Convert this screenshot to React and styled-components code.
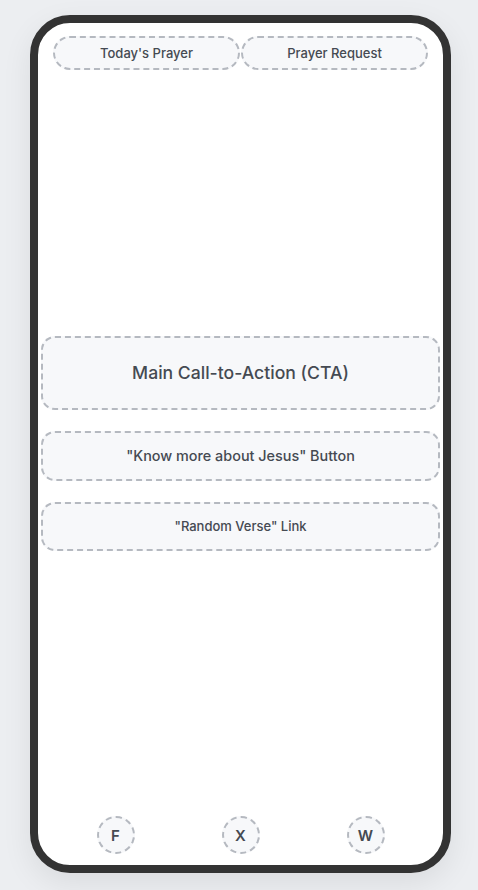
import styled, { createGlobalStyle } from 'styled-components';

const GlobalStyle = createGlobalStyle`
  * {
    box-sizing: border-box;
  }

  body {
    margin: 0;
    background: #eceef1;
    font-family: Inter, "Noto Sans", sans-serif;
  }
`;

function App() {
  return (
    <>
      <GlobalStyle />
      <Page>
        <Phone>
          <TopBar>
            <PillButton>Today's Prayer</PillButton>
            <PillButton>Prayer Request</PillButton>
          </TopBar>
          <Middle>
            <Block $height={74} $size={17.6}>Main Call-to-Action (CTA)</Block>
            <Block $height={50} $size={14.4}>"Know more about Jesus" Button</Block>
            <Block $height={49} $size={13}>"Random Verse" Link</Block>
          </Middle>
          <Footer>
            <Social>F</Social>
            <Social>X</Social>
            <Social>W</Social>
          </Footer>
        </Phone>
      </Page>
    </>
  );
}

const Page = styled.div`
  display: flex;
  padding: 15px 0 17px 30px;
`;

const Phone = styled.div`
  width: 421px;
  height: 858px;
  border: 8px solid #333333;
  border-radius: 40px;
  background: #ffffff;
  box-shadow: 0 10px 30px rgba(0, 0, 0, 0.08);
  display: flex;
  flex-direction: column;
  overflow: hidden;
`;

const TopBar = styled.div`
  display: flex;
  gap: 1px;
  padding: 13px 15px 0;
`;

const dashed = `
  border: 2px dashed #b5b9c0;
  background: #f7f8fa;
  color: #454a52;
  font-weight: 500;
  display: flex;
  align-items: center;
  justify-content: center;
`;

const PillButton = styled.div`
  ${dashed}
  flex: 1;
  height: 34px;
  border-radius: 999px;
  font-size: 13px;
`;

const Middle = styled.div`
  flex: 1;
  display: flex;
  flex-direction: column;
  justify-content: center;
  gap: 21px;
  padding: 0 3px;
`;

const Block = styled.div`
  ${dashed}
  height: ${(p) => p.$height}px;
  border-radius: 14px;
  font-size: ${(p) => p.$size}px;
`;

const Footer = styled.div`
  display: flex;
  justify-content: space-around;
  padding: 0 15px 11px;
`;

const Social = styled.div`
  ${dashed}
  width: 38px;
  height: 38px;
  border-radius: 50%;
  font-size: 15px;
  font-weight: 600;
`;

export default App;
